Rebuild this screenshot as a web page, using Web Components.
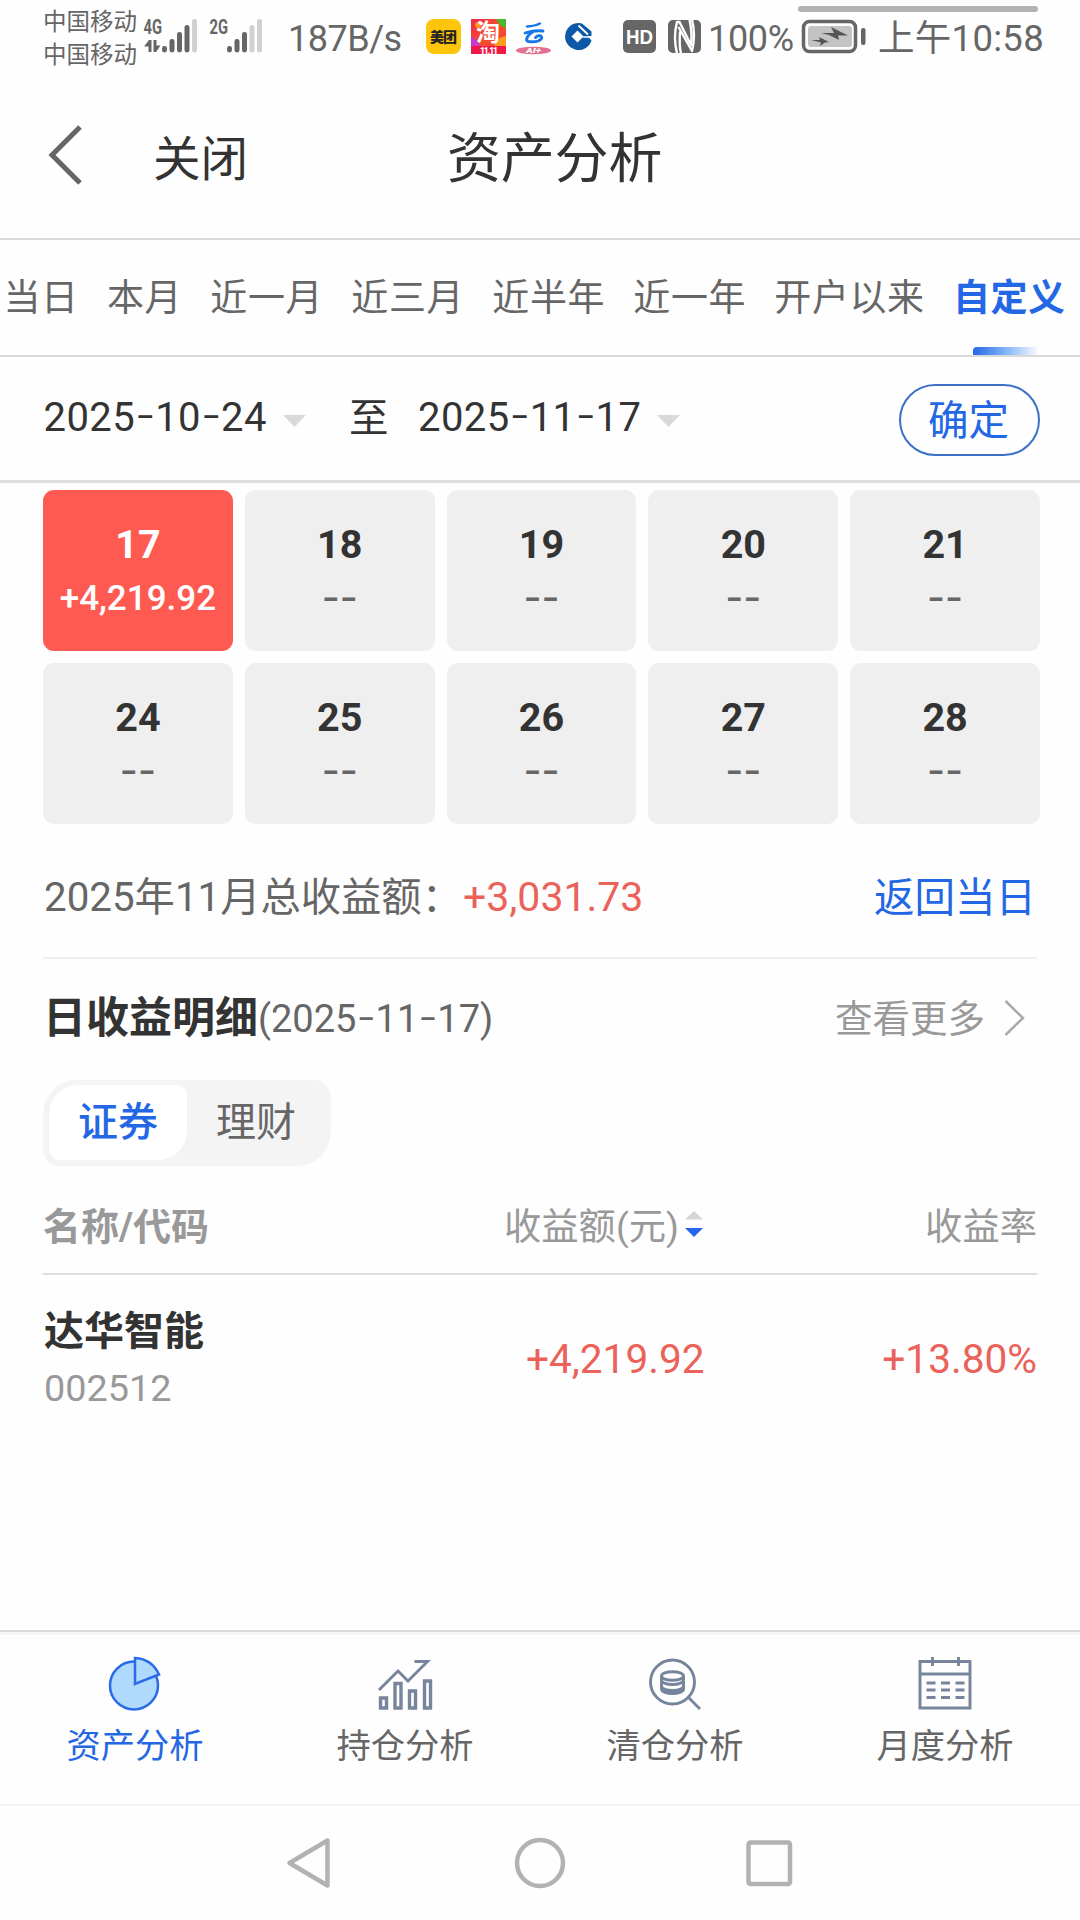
<!DOCTYPE html>
<html lang="zh-CN">
<head>
<meta charset="utf-8">
<title>资产分析</title>
<style>
html,body{margin:0;padding:0}
body{width:1080px;height:1920px;overflow:hidden;background:#fefefe;color:#333;line-height:1.2;font-family:Roboto,"Noto Sans CJK SC",sans-serif;--blue:#2467e4;--red:#ea625a;--gray:#666;--light:#999}
</style>
</head>
<body>
<asset-page></asset-page>
<script>
const define=(name,html)=>customElements.define(name,class extends HTMLElement{
  constructor(){super();this.attachShadow({mode:'open'})}
  connectedCallback(){
    this.shadowRoot.innerHTML='<style>:host{display:block;box-sizing:border-box}*{box-sizing:border-box}svg{display:block;flex:none;overflow:visible}</style>'+(typeof html==='function'?html(this):html);
  }
});

/* digits with wide dashes */
define('date-text',el=>`<style>:host{white-space:nowrap}i{font-style:normal;font-family:Inter,sans-serif;display:inline-block;width:.445em;font-size:1.13em;line-height:1;text-align:center;font-weight:350}</style><span>${el.getAttribute('value').replace(/-/g,'<i>-</i>')}</span>`);

define('signal-bars',el=>{
  const on=+el.getAttribute('on'),data=el.hasAttribute('data'),tops=[46,39,32,25,19];
  const x0=data?20.5:19.5;
  return `<svg width="56" height="40" viewBox="0 16 56 40">
  <text x="-.5" y="34" font-family="Roboto,sans-serif" font-size="20.500" font-weight="700" fill="#666" textLength="18.500" lengthAdjust="spacingAndGlyphs">${el.getAttribute('net')}</text>
  ${data?'<path d="M4.500 40h3v12h-3z M0 46.500 5 40v6.500z M9.500 40h3v12h-3z M12 45.500h4.500L12 52z" fill="#666"/>':''}
  ${tops.map((t,i)=>`<rect x="${x0-2.5+i*7.5}" y="${t}" width="5" height="${52.5-t}" rx="2.400" fill="${i<on?'#666':'#d0d0d0'}"/>`).join('')}</svg>`});

define('status-bar',`<style>
:host{height:80px;display:flex;align-items:flex-start;padding-left:43px;color:#666;position:relative;font-size:36px;line-height:40px;white-space:nowrap}
.carrier{width:101px;font-size:23.500px;line-height:33px;padding-top:5.500px}
signal-bars{margin-top:16px;width:66px}
.t{margin-top:19px}
svg{margin-top:16px}
.handle{position:absolute;left:798px;top:6px;width:240px;height:6px;border-radius:3px;background:#b3b3b3}
</style>
<div class="carrier"><div>中国移动</div><div>中国移动</div></div>
<signal-bars net="4G" on="4" data></signal-bars>
<signal-bars net="2G" on="3"></signal-bars>
<div class="t" style="width:138px;padding-left:12px;letter-spacing:-.5px">187B/s</div>
<svg width="294" height="40" viewBox="414 16 294 40" font-family="Noto Sans CJK SC,sans-serif">
 <rect x="426" y="19" width="35" height="35" rx="8" fill="#fdc50b"/>
 <text x="430" y="42" font-size="14" font-weight="900" fill="#222" textLength="27">美团</text>
 <defs><linearGradient id="tb" x1="0" y1="0" x2="1" y2="1"><stop offset="0" stop-color="#ef2b4b"/><stop offset=".55" stop-color="#f5502c"/><stop offset="1" stop-color="#f22c58"/></linearGradient></defs>
 <rect x="471" y="19" width="35" height="35" fill="url(#tb)"/>
 <path d="M496 19h10v9q-6-1-10-9z" fill="#4cb62d"/><path d="M471 36q7 5 9 10h-9z" fill="#c43ad0"/><path d="M494 46q3-9 12-10v10z" fill="#ff9d1d"/>
 <circle cx="478" cy="25" r="3" fill="#ff9d1d"/>
 <text x="476" y="41" font-size="24" font-weight="700" fill="#fff">淘</text>
 <rect x="471" y="46" width="35" height="8" fill="#ef1848"/>
 <text x="480" y="53.500" font-family="Roboto,sans-serif" font-size="8.500" font-weight="900" fill="#fff" textLength="18">11.11</text>
 <g fill="none" stroke="#1976e8" stroke-linecap="round" stroke-linejoin="round"><path d="M527 26.500q8-.5 13-3" stroke-width="2.400"/><path d="M525 33q10-3 18-2" stroke-width="2.800"/><path d="M532.500 32c-5 3-8 9-4 9.500 5 .5 11 0 13-3 1-3-3-4-6-1" stroke-width="3"/></g>
 <ellipse cx="533.500" cy="50.500" rx="17.500" ry="3.800" fill="#e1718f"/>
 <text x="526" y="53.300" font-family="Roboto,sans-serif" font-size="8" font-weight="900" font-style="italic" fill="#fff" textLength="15" lengthAdjust="spacingAndGlyphs">AI+</text>
 <path d="M579 23a13.500 13.500 0 1 0 12.500 17.500l-4-4.500h4v-4.500l-9.500-8q-1.500-.5-3-.5z" fill="#0b59a8"/>
 <path d="M577.500 30.500 583.500 36.500 577.500 42.500 571.500 36.500z" fill="#fff"/><path d="M578.500 25.500 588 34.500" stroke="#fff" stroke-width="1.800"/><path d="M583 37h9" stroke="#fff" stroke-width="1.500"/>
 <rect x="623" y="20" width="33" height="33" rx="5" fill="#666"/>
 <text x="626" y="44" font-family="Liberation Sans,sans-serif" font-size="20.500" font-weight="700" fill="#fff" textLength="27" lengthAdjust="spacingAndGlyphs">HD</text>
 <rect x="668" y="20" width="33" height="33" rx="5" fill="#666"/>
 <g fill="none" stroke="#fff" stroke-width="2.400" stroke-linejoin="round"><path d="M677 53.500q-4-16 0-31.500h2.500L691 45q1.500-12-1.500-25.500"/><path d="M692 19.500q4 16 0 31.500L678.500 27M681 53.500q-2-8-1-22"/></g>
</svg>
<div class="t" style="width:92px;letter-spacing:-.3px">100%</div>
<svg width="70" height="40" viewBox="800 16 70 40"><rect x="803.500" y="21.500" width="52" height="30" rx="6" fill="none" stroke="#666" stroke-width="3.500"/><rect x="808" y="26" width="44" height="21" rx="3" fill="#c3c3c3"/><path d="M811 40h9l-1-3 10 5-4 .5-5 3.500 1-3.500zM821 33h13l-3-6 17 8.500h-10l1 4.500-10-5z" fill="#555"/><rect x="861" y="28" width="4.500" height="17" rx="2" fill="#666"/></svg>
<div class="t" style="margin-left:8px;font-size:36.500px;letter-spacing:.3px">上午10:58</div>
<div class="handle"></div>`);

define('app-header',`<style>
:host{height:160px;display:flex;align-items:center;padding:0 0 9px 48px;border-bottom:2px solid #dadada}
.close{font-size:47.500px;width:294px;margin:11px 0 0 71px}.title{font-size:54px;letter-spacing:-.2px;margin-top:12px}
</style>
<svg width="34" height="60" viewBox="0 0 34 60"><path d="M32 2 4 30 32 58" fill="none" stroke="#666" stroke-width="5"/></svg>
<div class="close"><slot name="action"></slot></div><div class="title"><slot></slot></div>`);

define('period-tab',`<style>
:host{font-size:37px;letter-spacing:.6px;color:#666;height:100%;padding-top:4px;display:flex;align-items:center;position:relative;white-space:nowrap;flex:none}
:host([active]){color:var(--blue);font-weight:700}
i{display:none;position:absolute;left:20px;bottom:0;width:66px;height:8px;border-radius:4px 0 0 0;background:linear-gradient(90deg,#2467e8,#8cbcf8 55%,transparent)}
:host([active]) i{display:block}
</style><slot></slot><i></i>`);
define('period-tabs',`<style>:host{height:117px;display:flex;gap:28.200px;padding-left:3.500px;border-bottom:2px solid #dadada;overflow:hidden}</style><slot></slot>`);

define('date-field',el=>`<style>:host{display:flex;align-items:center;font-size:40px;letter-spacing:.4px;color:#333}svg{margin-left:16px;margin-top:4px}date-text{margin-top:-3px}</style><date-text value="${el.getAttribute('value')}"></date-text><svg width="23" height="12"><path d="M0 0h23L11.500 12z" fill="#d9d9d9"/></svg>`);
define('date-range',`<style>
:host{height:126px;display:flex;align-items:center;padding:0 40px 0 43.500px;border-bottom:3px solid #dedede}
date-field{width:263px}
.to{font-size:39.500px;margin:1px 0 0 42.500px;width:69px}
.ok{margin-left:auto;margin-top:2px;padding:3px 2px 0 0;width:141px;height:72px;border:2px solid #3c70c8;border-radius:36px;color:var(--blue);font-size:40.500px;display:flex;align-items:center;justify-content:center}
</style><date-field value="2025-10-24"></date-field><div class="to">至</div><date-field value="2025-11-17"></date-field><div class="ok"><span>确定</span></div>`);

define('day-card',`<style>
:host{height:161px;border-radius:11px;background:#efefef;padding-top:32px;text-align:center;color:#333}
:host([up]){background:#ff5a52;color:#fff}
.d{font-size:39.500px;font-weight:700;line-height:46px}
.v{font-size:39px;font-weight:500;line-height:42px;margin-top:8px;color:#666;font-family:Inter,sans-serif}
:host([up]) .v{color:#fff;font-family:Roboto,sans-serif;font-weight:500;font-size:35px;margin-top:10px}
</style><div class="d"><slot></slot></div><div class="v"><slot name="v"><span>--</span></slot></div>`);
define('month-grid',`<style>:host{display:grid;grid-template-columns:repeat(5,1fr);gap:12px;padding:7px 40px 0 43px}</style><slot></slot>`);

define('month-total',`<style>
:host{height:135px;margin:0 43px;padding:15px 1px 0 1px;display:flex;align-items:center;border-bottom:2px solid #efefef;font-size:40.300px;color:#666}
.n{color:var(--red);font-size:41px;margin-left:1px}.b{margin-left:auto;color:var(--blue);font-size:40.500px}
</style><span><slot></slot></span><span class="n"><slot name="n"></slot></span><span class="b"><slot name="b"></slot></span>`);

define('detail-head',`<style>
:host{height:121px;display:flex;align-items:center;padding:0 55px 2px 43px;color:#666}
.h{font-size:43px;font-weight:700;color:#333;margin-top:1px}.d{font-size:38px;display:flex}
.m{font-size:37.500px;color:#999;margin-left:auto;margin-right:19px;margin-top:2px}
svg{margin-top:-2px}
</style><span class="h">日收益明细</span><span class="d"><date-text value="(2025-11-17)"></date-text></span><span class="m">查看更多</span>
<svg width="21" height="36"><path d="M1.500 1 19 18 1.500 35" fill="none" stroke="#aaa" stroke-width="2.500"/></svg>`);

define('seg-switch',`<style>
:host{width:288px;height:86px;margin-left:43px;background:#f4f4f4;border-radius:34px 17px 34px 17px;display:flex;padding:5px 6px 6px;font-size:40px;color:#666}
div{flex:1;display:flex;align-items:center;justify-content:center;padding-top:1px}
.on{background:#fff;color:var(--blue);font-weight:500;border-radius:29px 11px 29px 11px}
</style><div class="on"><slot name="a"></slot></div><div><slot name="b"></slot></div>`);

define('table-head',`<style>
:host{height:109px;margin:0 43px;padding:16px 0 0 0;display:flex;align-items:center;border-bottom:2px solid #dedede;font-size:37.300px;color:#999}
b{width:461px;font-size:38px}.r{margin-left:auto}svg{margin:-7px 0 0 6px}
</style><b>名称/代码</b><span>收益额(元)</span><svg width="18" height="26"><path d="M0 8.500 9 0l9 8.500z" fill="#d6d6d6"/><path d="M0 17h18l-9 9z" fill="#2467ea"/></svg><span class="r">收益率</span>`);

define('stock-row',`<style>
:host{height:165px;margin:0 43px;padding:4px 0 0 1px;display:flex;align-items:center;color:var(--red);font-size:40.600px}
.id{width:482px;color:#333}.n{font-size:40px;font-weight:700;line-height:58px}.c{font-size:37.800px;line-height:55px;color:#999}.r{margin-left:auto}
</style><div class="id"><div class="n"><slot name="n"></slot></div><div class="c"><slot name="c"></slot></div></div><span><slot name="p"></slot></span><span class="r"><slot name="r"></slot></span>`);

const icons={
pie:'<g fill="#b0d9fe" stroke="#2b6be6" stroke-width="2.500"><circle cx="27" cy="31.500" r="24"/><path d="M28 4v26l24-9.500Q45 5 28 4z"/></g>',
chart:'<g fill="none" stroke="#76859b" stroke-width="3"><path d="M2 36 21 17l10 10L50.500 7.500H37.500" stroke-width="2.900"/><path d="M3.500 44h6v10h-6zM18 29.500h6V54h-6zM32.500 37h6v17h-6zM47.500 27h6v27h-6z" stroke-width="3.400"/></g>',
search:'<g fill="none" stroke="#76859b" stroke-width="2.900"><circle cx="25.500" cy="28" r="22"/><path d="M41.500 43.500 53 55"/><ellipse cx="25.500" cy="22" rx="11" ry="4.300"/><path d="M14.500 22v4c0 6 22 6 22 0v-4M14.500 27v5c0 6 22 6 22 0v-5M14.500 32v3c0 6 22 6 22 0v-3"/></g>',
calendar:'<g fill="none" stroke="#76859b" stroke-width="2.900"><path d="M3 7.500h50V54H3zM3 20h50M15.500 3v9M41.500 3v9"/><path d="M9.500 29h9M24 29h9M38.500 29h9M9.500 36h9M24 36h9M38.500 36h9M9.500 43.500h9M24 43.500h9M38.500 43.500h9"/></g>'};
define('nav-item',el=>`<style>
:host{flex:1;display:flex;flex-direction:column;align-items:center;padding-top:22px;font-size:34.300px;line-height:50px;color:#666}
:host([active]){color:var(--blue)}span{margin-top:9px}</style><svg width="56" height="58" viewBox="0 0 56 58">${icons[el.getAttribute('icon')]}</svg><span><slot></slot></span>`);
define('bottom-nav',`<style>:host{height:176px;border-top:2px solid #d9dbdb;border-bottom:2px solid #f3f3f3;display:flex;box-shadow:inset 0 3px 0 #f6f6f6}</style><slot></slot>`);
define('system-nav',`<style>:host{height:114px;display:flex;align-items:center;justify-content:center}</style>
<svg width="520" height="56" viewBox="280 1835 520 56" fill="none" stroke="#b2b2b2" stroke-width="4.500" stroke-linejoin="round"><path d="M289.500 1863 327.500 1840.500V1885.500z"/><circle cx="540" cy="1863" r="23"/><rect x="748.500" y="1842.500" width="41.500" height="41.500" rx="2"/></svg>`);

define('asset-page',`<style>
:host{width:1080px;height:1920px;display:flex;flex-direction:column}
.fill{flex:1}
</style>
<status-bar></status-bar>
<app-header><span slot="action">关闭</span>资产分析</app-header>
<period-tabs><period-tab>当日</period-tab><period-tab>本月</period-tab><period-tab>近一月</period-tab><period-tab>近三月</period-tab><period-tab>近半年</period-tab><period-tab>近一年</period-tab><period-tab>开户以来</period-tab><period-tab active>自定义</period-tab></period-tabs>
<date-range></date-range>
<month-grid><day-card up>17<span slot="v">+4,219.92</span></day-card><day-card>18</day-card><day-card>19</day-card><day-card>20</day-card><day-card>21</day-card><day-card>24</day-card><day-card>25</day-card><day-card>26</day-card><day-card>27</day-card><day-card>28</day-card></month-grid>
<month-total>2025年11月总收益额：<span slot="n">+3,031.73</span><span slot="b">返回当日</span></month-total>
<detail-head></detail-head>
<seg-switch><span slot="a">证券</span><span slot="b">理财</span></seg-switch>
<table-head></table-head>
<stock-row><span slot="n">达华智能</span><span slot="c">002512</span><span slot="p">+4,219.92</span><span slot="r">+13.80%</span></stock-row>
<div class="fill"></div>
<bottom-nav><nav-item icon="pie" active>资产分析</nav-item><nav-item icon="chart">持仓分析</nav-item><nav-item icon="search">清仓分析</nav-item><nav-item icon="calendar">月度分析</nav-item></bottom-nav>
<system-nav></system-nav>`);
</script>
</body>
</html>
